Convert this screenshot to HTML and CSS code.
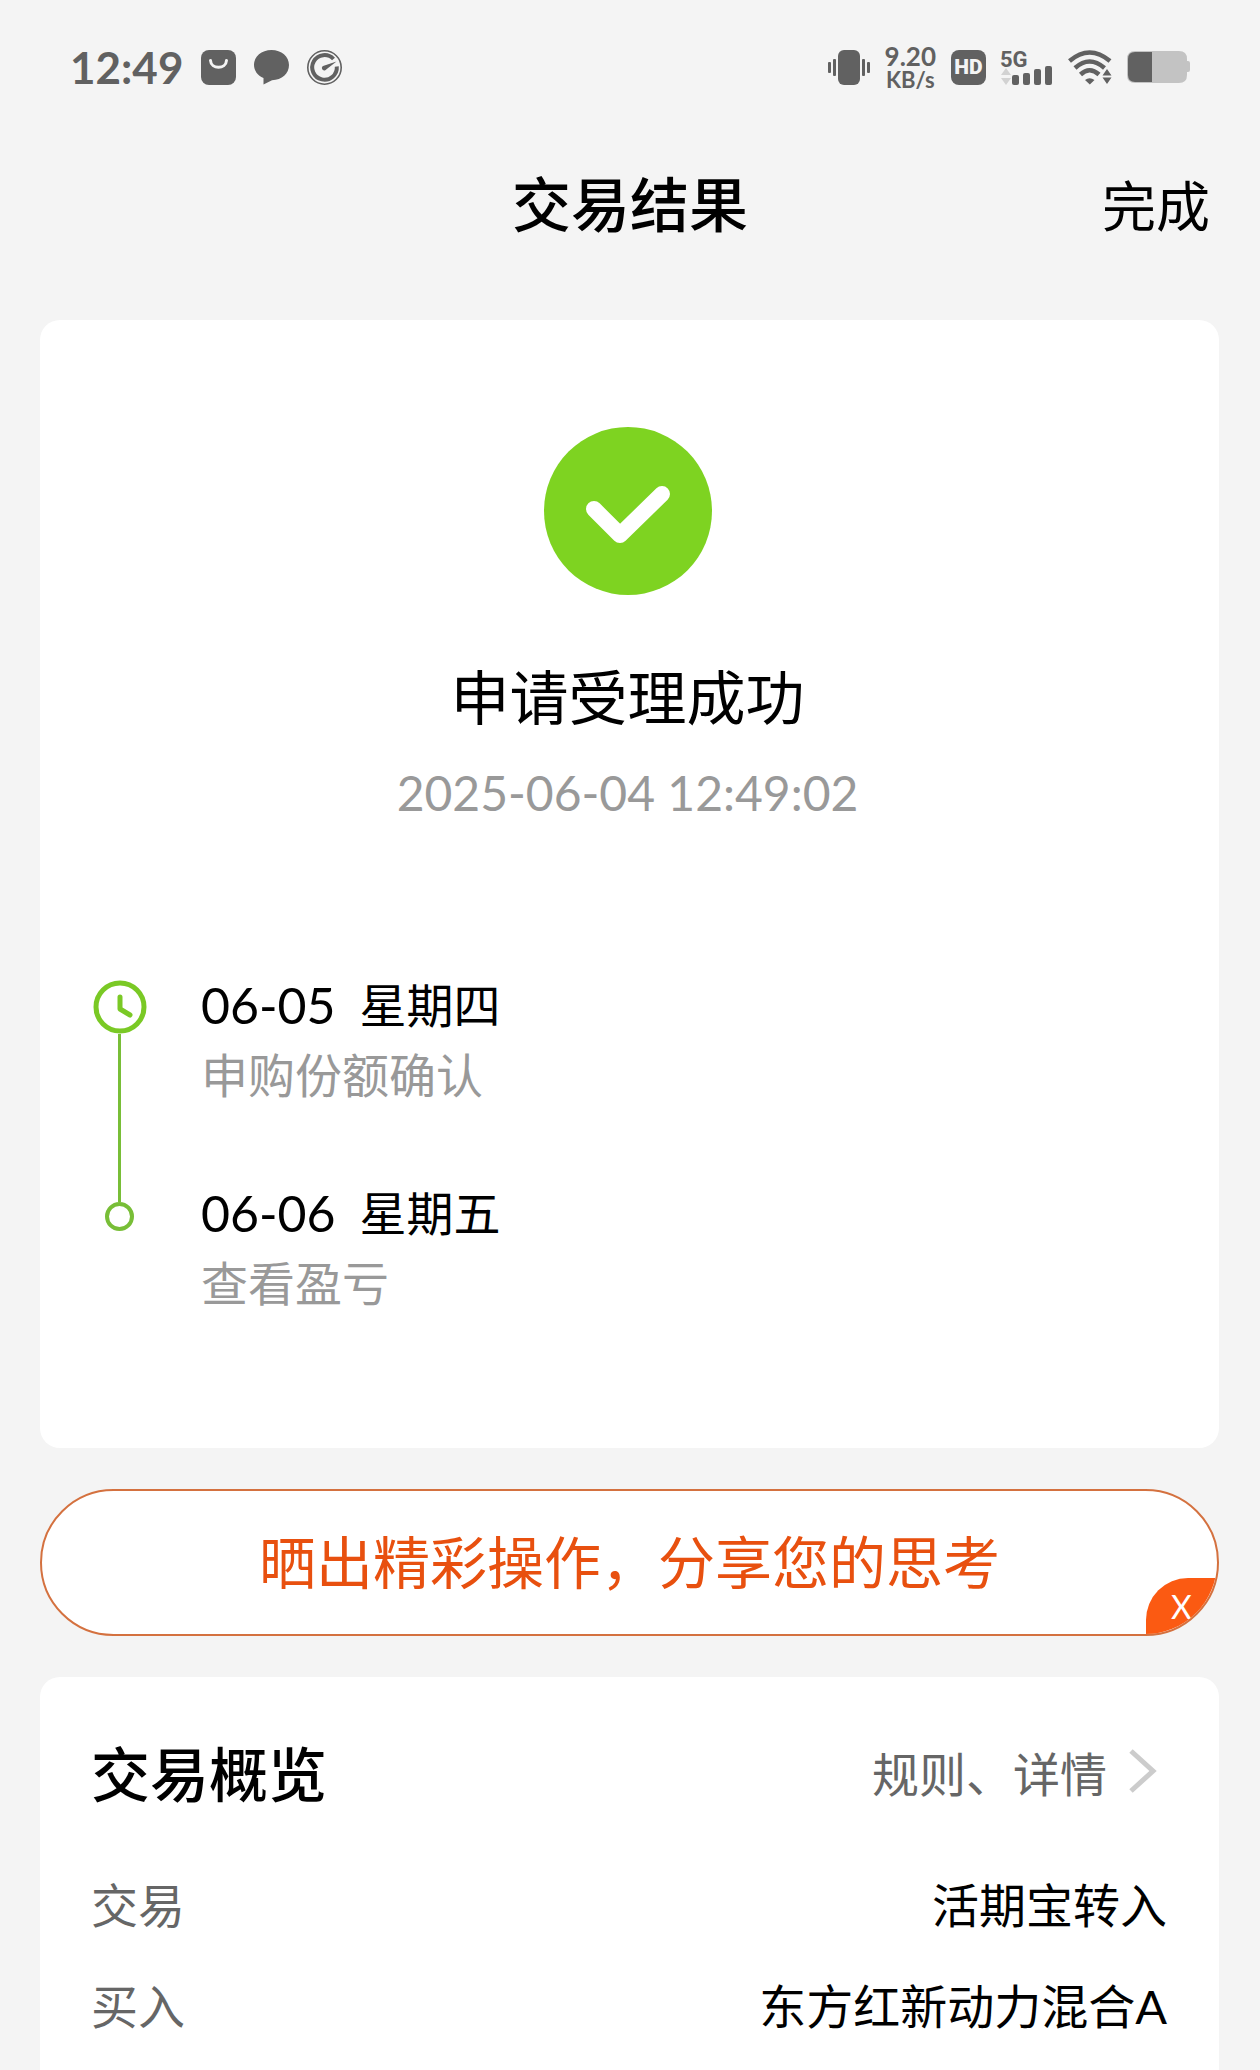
FILE: index.html
```html
<!DOCTYPE html>
<html lang="zh-CN">
<head>
  <meta charset="UTF-8">
  <meta name="viewport" content="width=device-width, initial-scale=1">
  <title>交易结果</title>
  <link rel="stylesheet" href="styles.css">
</head>
<body>
  <div class="status-bar">
    <div class="status-left">
      <span class="time">12:49</span>
      <svg class="icon" viewBox="0 0 35 35">
        <rect width="35" height="35" rx="8" fill="#616161"/>
        <path d="M9.500 10.500C10 19.500 25 19.500 25.500 10.500" fill="none" stroke="#f4f4f4" stroke-width="3" stroke-linecap="round"/>
      </svg>
      <svg class="icon" viewBox="0 0 35 35">
        <path d="M17.500 0C27.500 0 35 6.500 35 15S28 30 18 30.200L9.500 34.500V28C3.500 25.500 0 20.500 0 15C0 6.500 7.500 0 17.500 0Z" fill="#616161"/>
      </svg>
      <svg class="icon" viewBox="0 0 35 35" fill="none" stroke="#616161">
        <circle cx="17.500" cy="17.500" r="16.700" stroke-width="1.600"/>
        <path d="M26.500 9A12.300 12.300 0 1 0 29.800 16.500" stroke-width="4"/>
        <path d="M29.500 11.500L19.500 19.300A2.500 2.500 0 1 1 16 15.900Z" fill="#616161" stroke="none"/>
      </svg>
    </div>
    <div class="status-right">
      <svg class="icon-vibrate" viewBox="0 0 42 35" fill="#616161">
        <rect x="10" width="22" height="35" rx="6"/>
        <rect x="0" y="12" width="3" height="11" rx="1"/>
        <rect x="5" y="9" width="3" height="17" rx="1"/>
        <rect x="34" y="9" width="3" height="17" rx="1"/>
        <rect x="39" y="12" width="3" height="11" rx="1"/>
      </svg>
      <div class="speed">
        <span class="speed-value">9.20</span>
        <span class="speed-unit">KB/s</span>
      </div>
      <span class="hd">HD</span>
      <svg class="icon-signal" viewBox="0 0 52 35" fill="#616161">
        <text x="-1" y="17" class="signal-text">5G</text>
        <path d="M5 18L10 25H0ZM5 35L0 28H10Z" fill="#d2d2d2"/>
        <rect x="11" y="25" width="7" height="10" rx="2"/>
        <rect x="22" y="23" width="7" height="12" rx="2"/>
        <rect x="33" y="19" width="7" height="16" rx="2"/>
        <rect x="44" y="16" width="7" height="19" rx="2"/>
      </svg>
      <svg class="icon-wifi" viewBox="0 0 44 35">
        <g fill="none" stroke="#616161" stroke-width="4.500">
          <path d="M1.500 11Q21.500-6 42 11"/>
          <path d="M7 18Q21.500 5 36.500 18"/>
          <path d="M12.500 24.500Q21.500 16 31 24.500"/>
        </g>
        <path d="M17 30Q21.500 26.500 26.500 30L21.800 34.500ZM39 19L43.500 25.500H34.500ZM39 34L34.500 27.500H43.500Z" fill="#616161"/>
      </svg>
      <svg class="icon-battery" viewBox="0 0 63 32">
        <path d="M8 0H52Q60 0 60 8V10H61Q63 10 63 12V19Q63 21 61 21H60V24Q60 32 52 32H8Q0 32 0 24V8Q0 0 8 0Z" fill="#c3c3c3"/>
        <path d="M25 1H8Q1 1 1 8V24Q1 31 8 31H25Z" fill="#616161"/>
      </svg>
    </div>
  </div>

  <header class="nav">
    <h1 class="nav-title">交易结果</h1>
    <button type="button" class="nav-done">完成</button>
  </header>

  <main class="content">
    <section class="card result">
      <svg class="result-icon" viewBox="0 0 168 168">
        <circle cx="84" cy="84" r="84" fill="#7ed321"/>
        <path d="M50 82L76 108L118 67" fill="none" stroke="#fff" stroke-width="16" stroke-linecap="round" stroke-linejoin="round"/>
      </svg>
      <h2 class="result-title">申请受理成功</h2>
      <p class="result-time">2025-06-04 12:49:02</p>

      <ol class="timeline">
        <li class="step">
          <div class="marker">
            <svg class="marker-clock" viewBox="0 0 54 54" fill="none" stroke="#7ac925">
              <circle cx="27" cy="27" r="24" stroke-width="5"/>
              <path d="M27 17V29L37 35" stroke-width="5" stroke-linecap="round" stroke-linejoin="round"/>
            </svg>
            <div class="marker-line"></div>
          </div>
          <div class="step-text">
            <p class="step-date"><span class="step-day">06-05</span><span>星期四</span></p>
            <p class="step-desc">申购份额确认</p>
          </div>
        </li>
        <li class="step">
          <div class="marker marker-last">
            <div class="marker-line"></div>
            <div class="marker-dot"></div>
          </div>
          <div class="step-text">
            <p class="step-date"><span class="step-day">06-06</span><span>星期五</span></p>
            <p class="step-desc">查看盈亏</p>
          </div>
        </li>
      </ol>
    </section>

    <div class="share">
      <button type="button" class="share-button">晒出精彩操作，分享您的思考</button>
      <button type="button" class="share-close">X</button>
    </div>

    <section class="card overview">
      <div class="overview-head">
        <h2 class="overview-title">交易概览</h2>
        <a href="#" class="overview-link">规则、详情
          <svg class="chevron" viewBox="0 0 28 44" fill="none" stroke="#ccc" stroke-width="5">
            <path d="M2 2L24 22L2 42"/>
          </svg>
        </a>
      </div>
      <dl class="rows">
        <div class="row">
          <dt>交易</dt>
          <dd>活期宝转入</dd>
        </div>
        <div class="row">
          <dt>买入</dt>
          <dd>东方红新动力混合A</dd>
        </div>
      </dl>
    </section>
  </main>
</body>
</html>
```
FILE: styles.css
```css
* {
  box-sizing: border-box;
  margin: 0;
  padding: 0;
}
body {
  background: #f4f4f4;
  color: #000;
  font-family: Lato, "Noto Sans CJK SC", sans-serif;
  font-size: 47px;
}
button {
  border: none;
  background: none;
  color: inherit;
  font-family: inherit;
}

/* status bar */
.status-bar {
  display: flex;
  justify-content: space-between;
  align-items: center;
  height: 134px;
  padding: 0 70px;
  color: #616161;
  font-weight: 700;
}
.status-left {
  display: flex;
  align-items: center;
  gap: 18px;
}
.status-right {
  display: flex;
  align-items: center;
  gap: 15px;
}
.time {
  font-size: 44px;
}
.icon {
  width: 35px;
  height: 35px;
}
.icon-vibrate {
  width: 42px;
  height: 35px;
}
.speed {
  display: flex;
  flex-direction: column;
  align-items: center;
}
.speed-value {
  font-size: 26px;
  line-height: 26px;
}
.speed-unit {
  font-size: 22px;
  line-height: 22px;
}
.hd {
  width: 35px;
  height: 35px;
  border-radius: 8px;
  background: #616161;
  color: #f4f4f4;
  font-family: Roboto, sans-serif;
  font-size: 21px;
  font-weight: 900;
  line-height: 35px;
  text-align: center;
}
.icon-signal {
  width: 52px;
  height: 35px;
  overflow: visible;
}
.signal-text {
  font-family: Roboto, sans-serif;
  font-size: 22px;
}
.icon-wifi {
  width: 44px;
  height: 35px;
}
.icon-battery {
  width: 63px;
  height: 32px;
}

/* title bar */
.nav {
  display: grid;
  grid-template-columns: 1fr auto 1fr;
  align-items: center;
  height: 142px;
  padding: 0 50px;
}
.nav-title {
  grid-column: 2;
  padding-bottom: 8px;
  font-size: 59px;
  font-weight: 500;
}
.nav-done {
  justify-self: end;
  padding-bottom: 4px;
  font-size: 54px;
}

.content {
  padding: 44px 41px 0 40px;
}
.card {
  border-radius: 20px;
  background: #fff;
}

/* result */
.result {
  padding: 107px 56px 130px 52px;
  text-align: center;
}
.result-icon {
  display: block;
  width: 168px;
  height: 168px;
  margin: 0 auto 63px;
}
.result-title {
  font-size: 59px;
  font-weight: 400;
  line-height: 80px;
}
.result-time {
  margin-top: 25px;
  color: #999;
  font-size: 48px;
  line-height: 60px;
}
.timeline {
  margin-top: 147px;
  list-style: none;
  text-align: left;
}
.step {
  display: flex;
  gap: 54px;
}
.step:first-child {
  height: 208px;
}
.step-text {
  line-height: 70px;
}
.step-date {
  display: flex;
  gap: 24px;
}
.step-day {
  font-size: 50px;
}
.step-desc {
  color: #999;
}
.marker {
  display: flex;
  flex-direction: column;
  align-items: center;
  width: 55px;
  padding-top: 10px;
}
.marker-clock {
  width: 54px;
  height: 54px;
}
.marker-line {
  flex: 1;
  width: 3px;
  background: #78be37;
}
.marker-last {
  padding-top: 0;
}
.marker-last .marker-line {
  flex: none;
  height: 24px;
}
.marker-dot {
  width: 29px;
  height: 29px;
  border: 4px solid #78be37;
  border-radius: 50%;
}

/* share */
.share {
  position: relative;
  margin: 41px 0;
  overflow: hidden;
  border: 2px solid #d4713f;
  border-radius: 74px;
  background: #fff;
}
.share-button {
  display: block;
  width: 100%;
  height: 143px;
  padding-bottom: 8px;
  color: #e8500f;
  font-size: 57px;
}
.share-close {
  position: absolute;
  right: 0;
  bottom: 0;
  width: 71px;
  height: 56px;
  border-top-left-radius: 42px;
  background: #fb5a12;
  color: #fff;
  font-size: 32px;
}

/* overview */
.overview {
  padding: 44px 52px 14px 51px;
  border-bottom-left-radius: 0;
  border-bottom-right-radius: 0;
}
.overview-head {
  display: flex;
  justify-content: space-between;
  align-items: center;
  height: 100px;
}
.overview-title {
  font-size: 59px;
  font-weight: 500;
}
.overview-link {
  display: flex;
  align-items: center;
  gap: 22px;
  padding-right: 10px;
  color: #666;
  text-decoration: none;
}
.chevron {
  width: 28px;
  height: 44px;
}
.rows {
  margin-top: 34px;
}
.row {
  display: flex;
  justify-content: space-between;
  line-height: 101px;
}
.row dt {
  color: #666;
}
```
